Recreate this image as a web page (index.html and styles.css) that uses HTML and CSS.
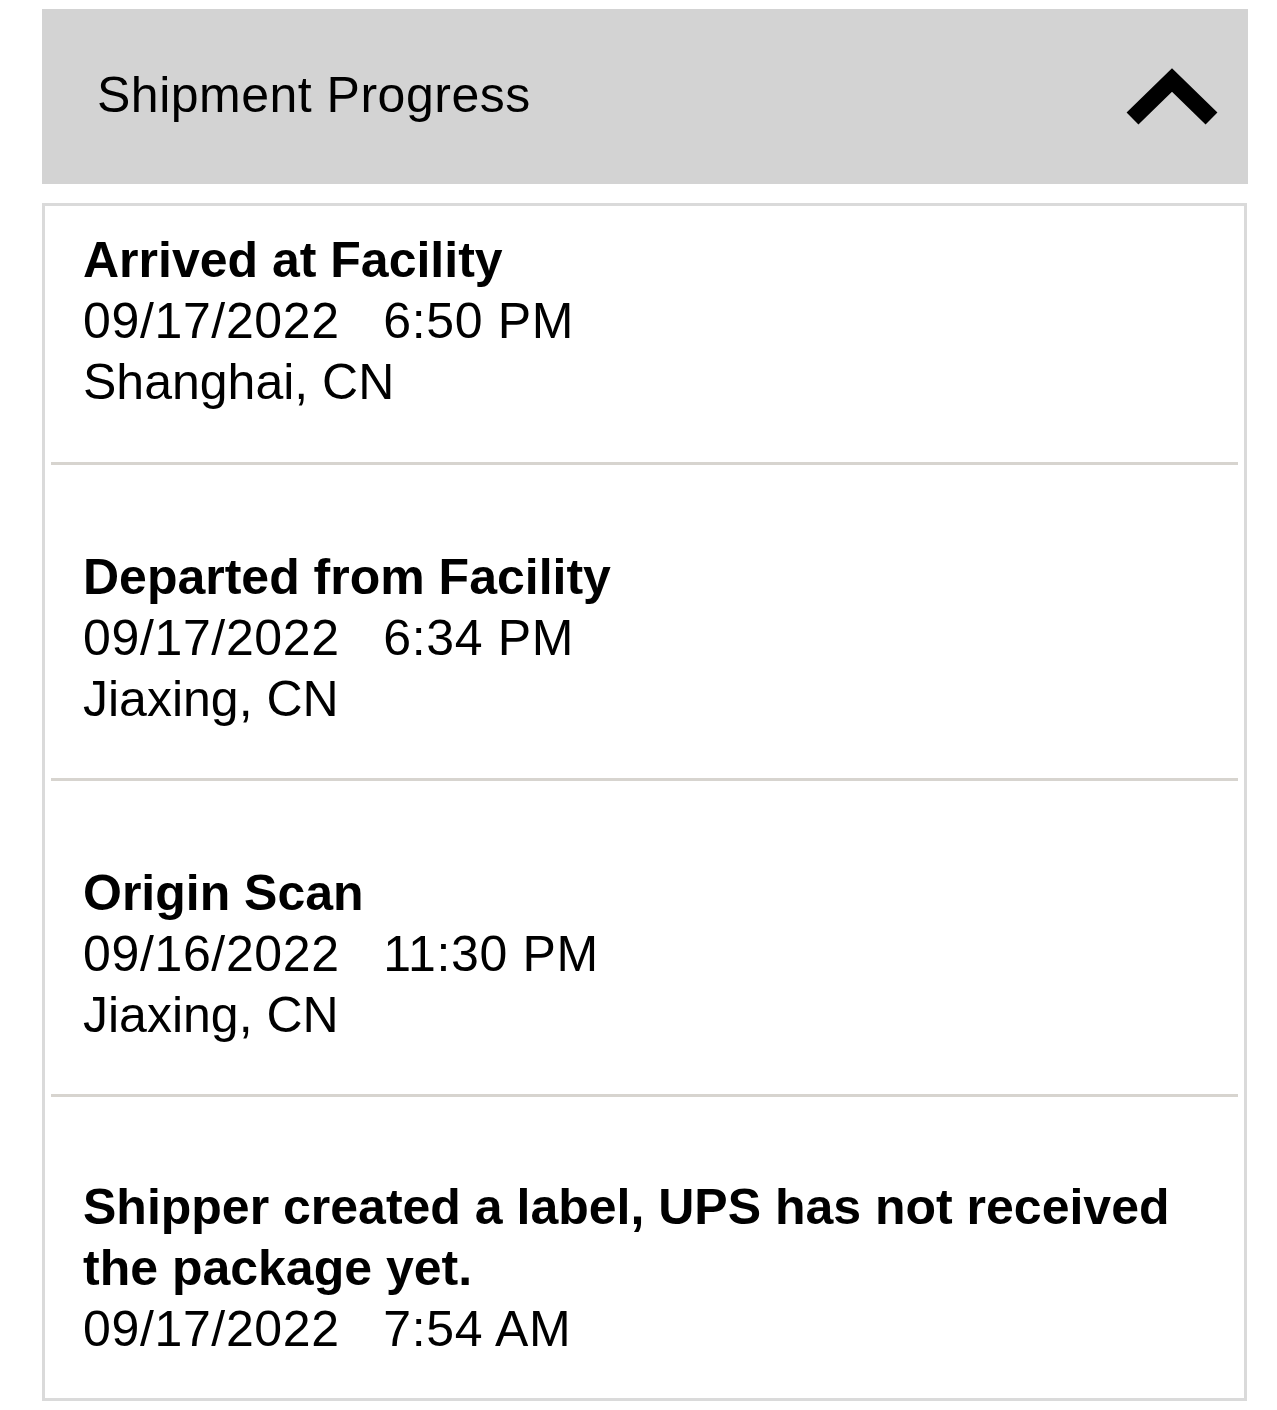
FILE: index.html
```html
<!DOCTYPE html>
<html>
<head>
<meta charset="utf-8">
<link rel="stylesheet" href="styles.css">
</head>
<body>
<div class="panel">
  <div class="header">
    <span class="header-title">Shipment Progress</span>
    <svg class="chevron" width="94" height="62" viewBox="0 0 94 62">
      <polyline points="6.5,52.5 46,14 85.5,52.5" fill="none" stroke="#000" stroke-width="17" stroke-linejoin="miter" stroke-linecap="butt"/>
    </svg>
  </div>
  <div class="card">
    <div class="event">
      <div class="event-title">Arrived at Facility</div>
      <div class="event-line dt">09/17/2022&nbsp;&nbsp;&nbsp;6:50 PM</div>
      <div class="event-line">Shanghai, CN</div>
    </div>
    <div class="event">
      <div class="event-title">Departed from Facility</div>
      <div class="event-line dt">09/17/2022&nbsp;&nbsp;&nbsp;6:34 PM</div>
      <div class="event-line">Jiaxing, CN</div>
    </div>
    <div class="event">
      <div class="event-title">Origin Scan</div>
      <div class="event-line dt">09/16/2022&nbsp;&nbsp;&nbsp;11:30 PM</div>
      <div class="event-line">Jiaxing, CN</div>
    </div>
    <div class="event">
      <div class="event-title">Shipper created a label, UPS has not received the package yet.</div>
      <div class="event-line dt">09/17/2022&nbsp;&nbsp;&nbsp;7:54 AM</div>
    </div>
  </div>
</div>
</body>
</html>
```

FILE: styles.css
```css
html, body {
  margin: 0;
  padding: 0;
  background: #ffffff;
}

body {
  font-family: "Liberation Sans", Arial, sans-serif;
  color: #000;
}

.panel {
  margin: 9px 0 0 42px;
  width: 1206px;
}

.header {
  height: 175px;
  background: #d3d3d3;
  display: flex;
  align-items: center;
  justify-content: space-between;
  padding: 0 28px 2px 55px;
  box-sizing: border-box;
}

.header-title {
  font-size: 50px;
  line-height: 61px;
  letter-spacing: 0.5px;
}

.chevron {
  display: block;
  margin-top: 2px;
}

.card {
  margin-top: 19px;
  width: 1205px;
  box-sizing: border-box;
  border: 3px solid #dadada;
}

.event {
  margin: 0 6px;
  padding: 82px 40px 48px 32px;
  border-bottom: 3px solid #d7d4cf;
  font-size: 50px;
  line-height: 61px;
}

.event:first-child {
  padding-top: 24px;
  padding-bottom: 49px;
}

.event:last-child {
  border-bottom: none;
  padding-top: 80px;
  padding-bottom: 38px;
}

.event-title {
  font-weight: 700;
}

.dt {
  letter-spacing: 0.65px;
}
```
